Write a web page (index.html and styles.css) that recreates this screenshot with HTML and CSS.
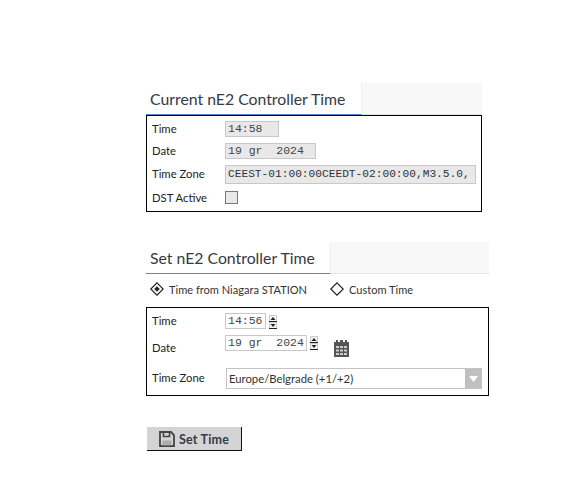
FILE: index.html
```html
<!DOCTYPE html>
<html lang="en">
<head>
<meta charset="utf-8">
<title>nE2 Controller Time</title>
<link rel="stylesheet" href="styles.css">
</head>
<body>
<main class="page">
  <section class="section section-current">
    <div class="tabbar"><h2 class="tab tab-current">Current nE2 Controller Time</h2></div>
    <div class="box box-current">
      <div class="row row-c1"><span class="label">Time</span><span class="field w-time">14:58</span></div>
      <div class="row row-c2"><span class="label">Date</span><span class="field w-date">19 gr  2024</span></div>
      <div class="row row-c3"><span class="label">Time Zone</span><span class="field w-zone">CEEST-01:00:00CEEDT-02:00:00,M3.5.0,</span></div>
      <div class="row row-c4"><span class="label label-dst">DST Active</span><span class="check"></span></div>
    </div>
  </section>

  <section class="section section-set">
    <div class="tabbar"><h2 class="tab tab-set">Set nE2 Controller Time</h2></div>
    <div class="radios">
      <label class="radio"><svg class="diamond" width="14" height="14" viewBox="0 0 14 14"><path d="M7 .8 13.2 7 7 13.2 .8 7Z" fill="#fff" stroke="#222" stroke-width="1.2"/><path d="M7 4.2 9.8 7 7 9.8 4.2 7Z" fill="#222"/></svg>Time from Niagara STATION</label>
      <label class="radio"><svg class="diamond" width="14" height="14" viewBox="0 0 14 14"><path d="M7 .8 13.2 7 7 13.2 .8 7Z" fill="#fff" stroke="#222" stroke-width="1.2"/></svg>Custom Time</label>
    </div>
    <div class="box box-set">
      <div class="row row-s1"><span class="label">Time</span><span class="field edit w-time-e">14:56</span>
        <svg class="spin" width="10" height="14" viewBox="0 0 10 14"><path d="M1.500 6.500v-6h7v6M1.500 13.500v-6h7v6" fill="#f4f4f4" stroke="#ccc"/><path d="M1 6.500h8M1 13.500h8" stroke="#222"/><path d="M5 2 7.500 5h-5ZM5 12 2.500 9h5Z" fill="#222"/></svg></div>
      <div class="row row-s2"><span class="label label-date">Date</span><span class="field edit w-date-e">19 gr  2024</span>
        <svg class="spin" width="10" height="14" viewBox="0 0 10 14"><path d="M1.500 6.500v-6h7v6M1.500 13.500v-6h7v6" fill="#f4f4f4" stroke="#ccc"/><path d="M1 6.500h8M1 13.500h8" stroke="#222"/><path d="M5 2 7.500 5h-5ZM5 12 2.500 9h5Z" fill="#222"/></svg>
        <svg class="cal" width="15" height="17" viewBox="0 0 15 17"><path d="M0 2h2V0h2v2h2V0h3v2h2V0h2v2h2v15H0Z" fill="#555"/><path d="M2 6h3v2H2zM6 6h3v2H6zM10 6h3v2h-3zM2 9.500h3v2H2zM6 9.500h3v2H6zM10 9.500h3v2h-3zM2 13h3v2H2zM6 13h3v2H6zM10 13h3v2h-3z" fill="#ccc"/></svg></div>
      <div class="row row-s3"><span class="label">Time Zone</span>
        <div class="select"><span class="select-text">Europe/Belgrade (+1/+2)</span><span class="select-arrow"><svg width="9" height="6" viewBox="0 0 9 6"><path d="M0 0h9L4.500 6Z" fill="#fff"/></svg></span></div></div>
    </div>
    <button class="button" type="button"><svg width="16" height="16" viewBox="0 0 16 16"><path d="M1 1h11l3 3v11H1Z" fill="none" stroke="#444" stroke-width="1.800"/><path d="M4.500 1v4.500h6V1" fill="none" stroke="#444" stroke-width="1.600"/><path d="M3.500 9.500h9v5h-9z" fill="#aaa"/></svg><span class="button-text">Set Time</span></button>
  </section>
</main>
</body>
</html>
```
FILE: styles.css
```css
* { box-sizing: border-box; }
html, body { margin: 0; background: #fff; }
.page {
  padding: 83px 0 0 146px;
  font-family: Lato, "Noto Sans", sans-serif;
  font-size: 11.300px;
  color: #222;
}
.section-current { width: 336px; }
.section-set { width: 343px; margin-top: 30px; }
.tabbar { height: 32px; background: #f8f8f8; border-bottom: 1px solid #e4e4e4; display: flex; }
.tab {
  margin: 0;
  height: 32px;
  padding: 5px 0 0 4px;
  background: #fff;
  border-bottom: 1px solid #5a86cf;
  border-right: 1px solid #f0f0f0;
  font-size: 15.800px;
  line-height: 21px;
  font-weight: 400;
  color: #333b45;
  white-space: nowrap;
}
.tab-current { width: 216px; }
.tab-set { width: 185px; }
.box { border: 1px solid #000; border-width: 1px 1.500px 1.500px 1px; padding: 0 0 0 5px; }
.box-current { height: 97px; }
.box-set { height: 89px; }
.row { display: flex; align-items: center; }
.label { width: 73px; flex: none; white-space: nowrap; line-height: 15px; position: relative; top: -1px; }
.label-dst { top: 0; }
.field {
  display: block;
  height: 16px;
  padding: 0 2px;
  background: #e8e8e8;
  border: 1px solid #c8c8c8;
  font-family: "Liberation Mono", monospace;
  font-size: 11.500px;
  line-height: 13px;
  color: #444;
  white-space: pre;
  overflow: hidden;
}
.edit { background: #fff; }
.w-time { width: 54px; }
.w-date { width: 91px; }
.w-zone { width: 251px; height: 19px; line-height: 17px; padding: 0 2px; font-size: 11.200px; color: #333; }
.w-time-e { width: 41px; }
.w-date-e { width: 82px; }
.check { width: 13px; height: 13px; background: #e8e8e8; border: 1px solid #777; margin-top: 1px; }
.row-c1 { height: 18px; margin-top: 4px; }
.row-c2 { height: 18px; margin-top: 4px; }
.row-c3 { height: 20px; margin-top: 4px; }
.row-c4 { height: 18px; margin-top: 4px; }
.radios { display: flex; gap: 23px; height: 33px; padding: 7px 0 0 4px; color: #333; font-size: 11.050px; }
.radio { display: flex; align-items: center; gap: 5px; height: 16px; white-space: nowrap; }
.row-s1 { height: 18px; margin-top: 4px; }
.row-s2 { height: 20px; margin-top: 5px; align-items: flex-start; }
.label-date { margin-top: 6px; }
.row-s3 { height: 22px; margin-top: 12px; }
.spin { margin-left: 2px; flex: none; }
.row-s2 .spin { margin-top: 1px; }
.row-s1 .spin { margin-top: 1px; }
.cal { margin: 5px 0 0 15px; flex: none; }
.select { display: flex; width: 256px; height: 21px; border: 1px solid #c4c4c4; margin-left: 1px; margin-top: 1px; }
.select-text { flex: 1; padding-left: 2px; line-height: 19px; color: #333; }
.select-arrow { width: 16px; background: #c0c0c0; display: flex; align-items: center; justify-content: center; }
.button {
  display: flex;
  align-items: center;
  gap: 4px;
  width: 95px;
  height: 24px;
  margin: 31px 0 0 1px;
  padding: 0 0 0 12px;
  background: #d4d4d4;
  border: 0;
  border-right: 1px solid #111;
  border-bottom: 1px solid #111;
  font-family: Lato, sans-serif;
  font-size: 12.500px;
  font-weight: 700;
  letter-spacing: .2px;
  color: #333b45;
}
.button-text { padding-top: 1px; }
```
